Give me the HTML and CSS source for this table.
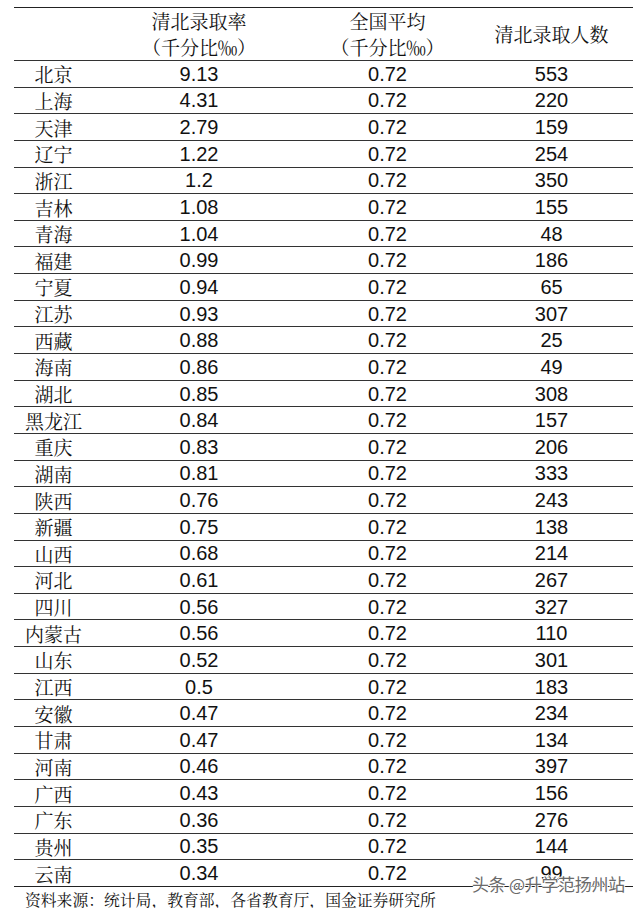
FILE: index.html
```html
<!DOCTYPE html>
<html lang="zh">
<head>
<meta charset="utf-8">
<link rel="stylesheet" href="styles.css">
</head>
<body>
<div class="page">
  <div class="table">
    <div class="row head">
      <div class="c0"></div>
      <div class="c1 hd">清北录取率<br>（千分比‰）</div>
      <div class="c2 hd">全国平均<br>（千分比‰）</div>
      <div class="c3 hd">清北录取人数</div>
    </div>
    <div class="row"><div class="c0">北京</div><div class="c1">9.13</div><div class="c2">0.72</div><div class="c3">553</div></div>
    <div class="row"><div class="c0">上海</div><div class="c1">4.31</div><div class="c2">0.72</div><div class="c3">220</div></div>
    <div class="row"><div class="c0">天津</div><div class="c1">2.79</div><div class="c2">0.72</div><div class="c3">159</div></div>
    <div class="row"><div class="c0">辽宁</div><div class="c1">1.22</div><div class="c2">0.72</div><div class="c3">254</div></div>
    <div class="row"><div class="c0">浙江</div><div class="c1">1.2</div><div class="c2">0.72</div><div class="c3">350</div></div>
    <div class="row"><div class="c0">吉林</div><div class="c1">1.08</div><div class="c2">0.72</div><div class="c3">155</div></div>
    <div class="row"><div class="c0">青海</div><div class="c1">1.04</div><div class="c2">0.72</div><div class="c3">48</div></div>
    <div class="row"><div class="c0">福建</div><div class="c1">0.99</div><div class="c2">0.72</div><div class="c3">186</div></div>
    <div class="row"><div class="c0">宁夏</div><div class="c1">0.94</div><div class="c2">0.72</div><div class="c3">65</div></div>
    <div class="row"><div class="c0">江苏</div><div class="c1">0.93</div><div class="c2">0.72</div><div class="c3">307</div></div>
    <div class="row"><div class="c0">西藏</div><div class="c1">0.88</div><div class="c2">0.72</div><div class="c3">25</div></div>
    <div class="row"><div class="c0">海南</div><div class="c1">0.86</div><div class="c2">0.72</div><div class="c3">49</div></div>
    <div class="row"><div class="c0">湖北</div><div class="c1">0.85</div><div class="c2">0.72</div><div class="c3">308</div></div>
    <div class="row"><div class="c0">黑龙江</div><div class="c1">0.84</div><div class="c2">0.72</div><div class="c3">157</div></div>
    <div class="row"><div class="c0">重庆</div><div class="c1">0.83</div><div class="c2">0.72</div><div class="c3">206</div></div>
    <div class="row"><div class="c0">湖南</div><div class="c1">0.81</div><div class="c2">0.72</div><div class="c3">333</div></div>
    <div class="row"><div class="c0">陕西</div><div class="c1">0.76</div><div class="c2">0.72</div><div class="c3">243</div></div>
    <div class="row"><div class="c0">新疆</div><div class="c1">0.75</div><div class="c2">0.72</div><div class="c3">138</div></div>
    <div class="row"><div class="c0">山西</div><div class="c1">0.68</div><div class="c2">0.72</div><div class="c3">214</div></div>
    <div class="row"><div class="c0">河北</div><div class="c1">0.61</div><div class="c2">0.72</div><div class="c3">267</div></div>
    <div class="row"><div class="c0">四川</div><div class="c1">0.56</div><div class="c2">0.72</div><div class="c3">327</div></div>
    <div class="row"><div class="c0">内蒙古</div><div class="c1">0.56</div><div class="c2">0.72</div><div class="c3">110</div></div>
    <div class="row"><div class="c0">山东</div><div class="c1">0.52</div><div class="c2">0.72</div><div class="c3">301</div></div>
    <div class="row"><div class="c0">江西</div><div class="c1">0.5</div><div class="c2">0.72</div><div class="c3">183</div></div>
    <div class="row"><div class="c0">安徽</div><div class="c1">0.47</div><div class="c2">0.72</div><div class="c3">234</div></div>
    <div class="row"><div class="c0">甘肃</div><div class="c1">0.47</div><div class="c2">0.72</div><div class="c3">134</div></div>
    <div class="row"><div class="c0">河南</div><div class="c1">0.46</div><div class="c2">0.72</div><div class="c3">397</div></div>
    <div class="row"><div class="c0">广西</div><div class="c1">0.43</div><div class="c2">0.72</div><div class="c3">156</div></div>
    <div class="row"><div class="c0">广东</div><div class="c1">0.36</div><div class="c2">0.72</div><div class="c3">276</div></div>
    <div class="row"><div class="c0">贵州</div><div class="c1">0.35</div><div class="c2">0.72</div><div class="c3">144</div></div>
    <div class="row last"><div class="c0">云南</div><div class="c1">0.34</div><div class="c2">0.72</div><div class="c3">99</div></div>
  </div>
  <div class="source">资料来源：统计局，教育部，各省教育厅，国金证券研究所</div>
  <div class="watermark">头条 @升学范扬州站</div>
</div>
</body>
</html>
```
FILE: styles.css
```css
html, body {
  margin: 0;
  padding: 0;
  background: #ffffff;
}
.page {
  position: relative;
  width: 640px;
  padding-top: 7px;
  box-sizing: border-box;
}
.table {
  margin-left: 14px;
  width: 619px;
  border-top: 1.5px solid #222;
  color: #111;
}
.row {
  display: grid;
  grid-template-columns: 79px 212px 165px 163px;
  height: 26.65px;
  border-bottom: 1px solid #333;
  box-sizing: border-box;
  align-items: center;
  text-align: center;
  font-family: "Liberation Sans", Arial, sans-serif;
  font-size: 20px;
  line-height: 1;
}
.row.head {
  height: 53px;
  border-bottom: 1px solid #333;
}
.row.last {
  border-bottom: 1.5px solid #222;
}
.c0, .hd {
  font-family: "Noto Serif CJK SC", "Noto Sans CJK SC", sans-serif;
  font-weight: 400;
  font-size: 19px;
}
.hd {
  line-height: 26px;
}
.source {
  margin-left: 25px;
  margin-top: 5px;
  font-family: "Noto Serif CJK SC", "Noto Sans CJK SC", sans-serif;
  font-size: 15.8px;
  line-height: 16px;
  color: #111;
  white-space: nowrap;
}
.watermark {
  position: absolute;
  left: 472px;
  top: 873px;
  font-family: "Noto Sans CJK SC", sans-serif;
  font-size: 17px;
  line-height: 22px;
  color: #6a6a6a;
  white-space: nowrap;
  letter-spacing: -0.3px;
  text-shadow: 1px 0 0 #fff, -1px 0 0 #fff, 0 1px 0 #fff, 0 -1px 0 #fff;
}
```
